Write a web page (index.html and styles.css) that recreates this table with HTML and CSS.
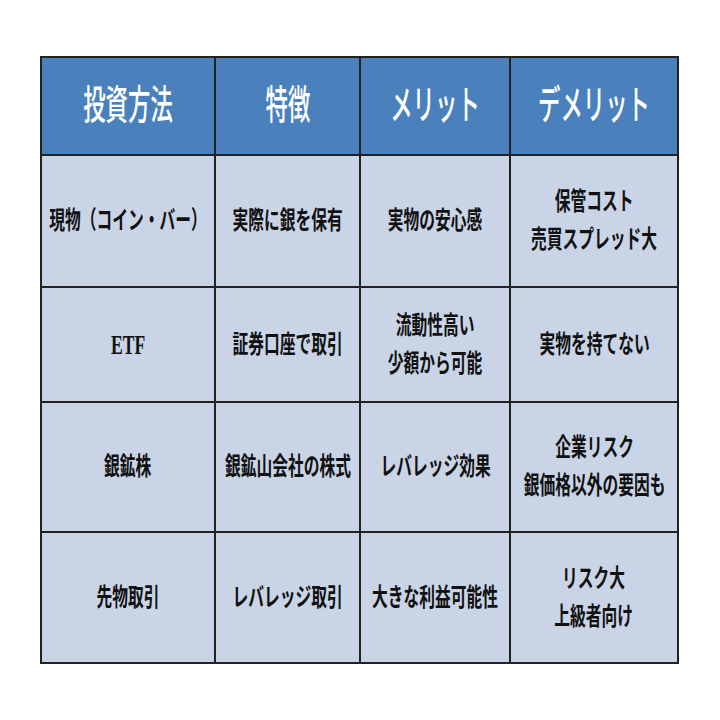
FILE: index.html
```html
<!DOCTYPE html>
<html lang="ja">
<head>
<meta charset="utf-8">
<link rel="stylesheet" href="styles.css">
</head>
<body>
<div class="page">
  <div class="table">
    <div class="cell head"><span class="txt">投資方法</span></div>
    <div class="cell head"><span class="txt">特徴</span></div>
    <div class="cell head"><span class="txt">メリット</span></div>
    <div class="cell head"><span class="txt">デメリット</span></div>

    <div class="cell"><span class="txt">現物（コイン・バー）</span></div>
    <div class="cell"><span class="txt">実際に銀を保有</span></div>
    <div class="cell"><span class="txt">実物の安心感</span></div>
    <div class="cell"><span class="txt">保管コスト<br>売買スプレッド大</span></div>

    <div class="cell"><span class="txt latin">ETF</span></div>
    <div class="cell"><span class="txt">証券口座で取引</span></div>
    <div class="cell"><span class="txt">流動性高い<br>少額から可能</span></div>
    <div class="cell"><span class="txt">実物を持てない</span></div>

    <div class="cell"><span class="txt">銀鉱株</span></div>
    <div class="cell"><span class="txt">銀鉱山会社の株式</span></div>
    <div class="cell"><span class="txt">レバレッジ効果</span></div>
    <div class="cell"><span class="txt">企業リスク<br>銀価格以外の要因も</span></div>

    <div class="cell"><span class="txt">先物取引</span></div>
    <div class="cell"><span class="txt">レバレッジ取引</span></div>
    <div class="cell"><span class="txt">大きな利益可能性</span></div>
    <div class="cell"><span class="txt">リスク大<br>上級者向け</span></div>
  </div>
</div>
</body>
</html>
```

FILE: styles.css
```css
html, body {
  margin: 0;
  padding: 0;
  background: #ffffff;
}

.page {
  width: 720px;
  height: 720px;
  padding: 56px 0 0 40px;
  box-sizing: border-box;
}

.table {
  display: grid;
  grid-template-columns: 172px 143px 148px 166px;
  grid-template-rows: 96px 130px 113px 128px 129px;
  gap: 2px;
  border: 2px solid #222;
  background: #222;
  width: max-content;
}

.cell {
  background: #c9d5e7;
  display: flex;
  align-items: center;
  justify-content: center;
  font-family: "Liberation Serif", "Noto Sans CJK JP", serif;
  font-weight: 700;
  font-size: 25px;
  line-height: 38px;
  color: #111;
}

.txt {
  display: inline-block;
  white-space: nowrap;
  text-align: center;
  transform: scaleX(0.63);
  flex: none;
}

.latin {
  font-size: 28px;
}

.head {
  background: #4a81bc;
  color: #ffffff;
  font-size: 40px;
  font-weight: 500;
  line-height: 44px;
}

.head .txt {
  transform: scaleX(0.56);
}
```
